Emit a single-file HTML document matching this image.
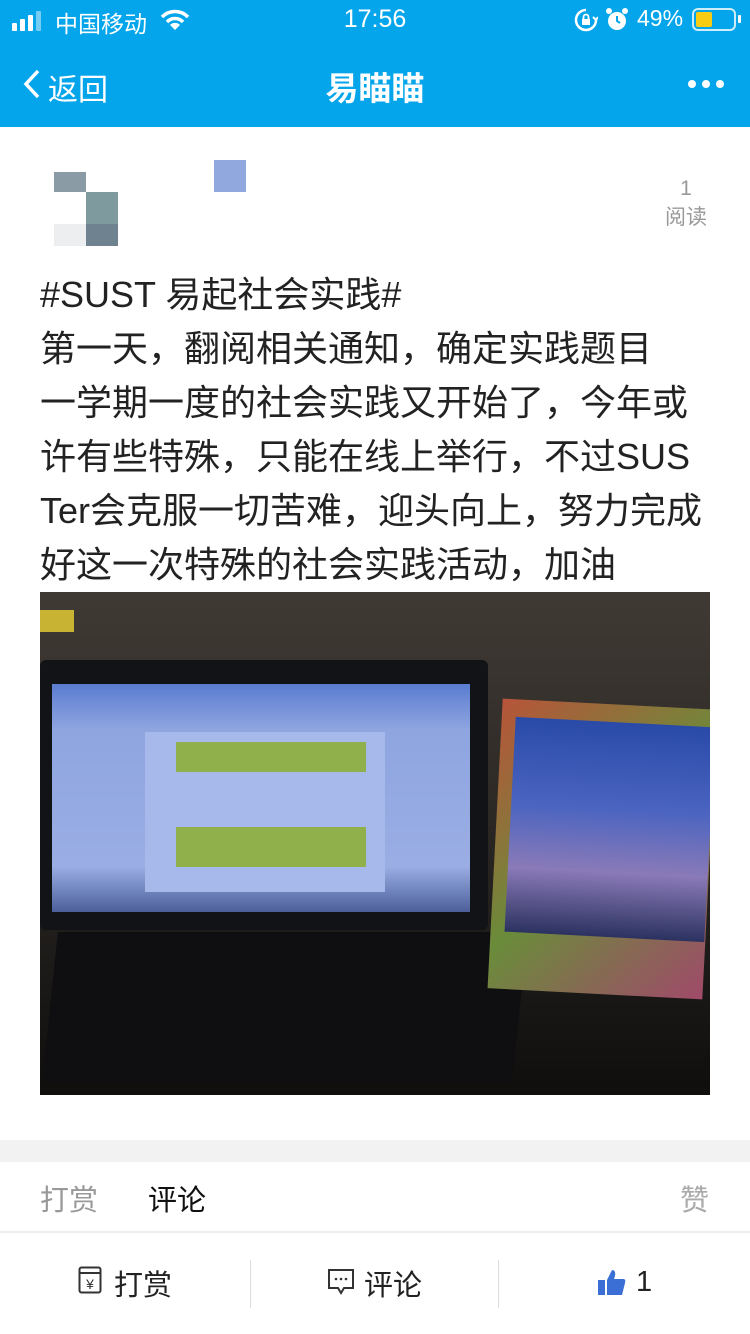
<!DOCTYPE html>
<html><head><meta charset="utf-8"><style>
*{margin:0;padding:0;box-sizing:border-box}
body{width:750px;height:1334px;background:#fff;font-family:"Liberation Sans","Noto Sans CJK SC",sans-serif;position:relative;overflow:hidden}
.abs{position:absolute}
</style></head><body>
<div class="abs" style="left:0;top:0;width:750px;height:127px;background:#04a5eb"></div>
<!-- status -->
<div class="abs" style="left:12px;top:11px;display:flex;align-items:flex-end;gap:3px">
<div style="width:5px;height:8px;background:#fff;border-radius:1px"></div>
<div style="width:5px;height:12px;background:#fff;border-radius:1px"></div>
<div style="width:5px;height:16px;background:#fff;border-radius:1px"></div>
<div style="width:5px;height:20px;background:rgba(255,255,255,.45);border-radius:1px"></div>
</div>
<div class="abs" style="left:55px;top:5px;color:#fff;font-size:23px">中国移动</div>
<svg class="abs" style="left:160px;top:9px" width="30" height="22" viewBox="0 0 30 22"><path d="M2 8 A18 18 0 0 1 28 8" stroke="#fff" stroke-width="3.5" fill="none"/><path d="M7 13 A11 11 0 0 1 23 13" stroke="#fff" stroke-width="3.5" fill="none"/><path d="M15 21 L10 16 A7 7 0 0 1 20 16 Z" fill="#fff"/></svg>
<div class="abs" style="left:0;width:750px;top:5px;text-align:center;color:#fff;font-size:25px">17:56</div>
<svg class="abs" style="left:574px;top:8px" width="24" height="24" viewBox="0 0 24 24"><path d="M12 2 A10 10 0 1 0 22 12" stroke="#fff" stroke-width="2.5" fill="none"/><path d="M22 12 L19 9 M22 12 L24 9" stroke="#fff" stroke-width="2"/><rect x="8" y="11" width="8" height="6" fill="#fff"/><path d="M9.5 11 V9 A2.5 2.5 0 0 1 14.5 9 V11" stroke="#fff" stroke-width="1.8" fill="none"/></svg>
<svg class="abs" style="left:605px;top:7px" width="24" height="26" viewBox="0 0 24 26"><circle cx="12" cy="14" r="9" fill="#fff"/><circle cx="4" cy="4" r="3" fill="#fff"/><circle cx="20" cy="4" r="3" fill="#fff"/><path d="M12 9 V14 L15 16" stroke="#04a5eb" stroke-width="2" fill="none"/></svg>
<div class="abs" style="left:637px;top:5px;color:#fff;font-size:23px">49%</div>
<div class="abs" style="left:692px;top:8px;width:44px;height:23px;border:2px solid rgba(255,255,255,.8);border-radius:6px;padding:2px"><div style="width:16px;height:15px;background:#f7cc12;border-radius:2px"></div></div>
<div class="abs" style="left:738px;top:15px;width:3px;height:8px;background:#fff;border-radius:1px"></div>
<!-- nav -->
<svg class="abs" style="left:22px;top:68px" width="20" height="32" viewBox="0 0 20 32"><path d="M16 3 L4 16 L16 29" stroke="#fff" stroke-width="3.5" fill="none"/></svg>
<div class="abs" style="left:48px;top:65px;color:#fff;font-size:30px">返回</div>
<div class="abs" style="left:0;width:750px;top:62px;text-align:center;color:#fff;font-size:33px;font-weight:bold">易瞄瞄</div>
<div class="abs" style="left:688px;top:80px;display:flex;gap:6px"><i style="width:8px;height:8px;background:#fff;border-radius:50%;display:block"></i><i style="width:8px;height:8px;background:#fff;border-radius:50%;display:block"></i><i style="width:8px;height:8px;background:#fff;border-radius:50%;display:block"></i></div>
<!-- avatar -->
<div class="abs" style="left:54px;top:172px;width:32px;height:20px;background:#8a9ba5"></div>
<div class="abs" style="left:86px;top:192px;width:32px;height:32px;background:#7f9a9f"></div>
<div class="abs" style="left:86px;top:224px;width:32px;height:22px;background:#6e8290"></div>
<div class="abs" style="left:54px;top:224px;width:32px;height:22px;background:#eceef0"></div>
<div class="abs" style="left:214px;top:160px;width:32px;height:32px;background:#91a8de"></div>
<div class="abs" style="left:660px;top:174px;width:52px;text-align:center;color:#999;font-size:21px;line-height:29px">1<br>阅读</div>
<!-- text -->
<div class="abs" style="left:40px;top:268px;width:700px;font-size:36px;line-height:54px;color:#222;white-space:nowrap">#SUST 易起社会实践#<br>第一天，翻阅相关通知，确定实践题目<br>一学期一度的社会实践又开始了，今年或<br>许有些特殊，只能在线上举行，不过SUS<br>Ter会克服一切苦难，迎头向上，努力完成<br>好这一次特殊的社会实践活动，加油</div>
<!-- photo -->
<div class="abs" style="left:40px;top:592px;width:670px;height:503px;background:linear-gradient(180deg,#403a34 0%,#2e2a26 40%,#1c1a18 75%,#0f0e0d 100%);overflow:hidden">
<div class="abs" style="left:0;top:18px;width:34px;height:22px;background:#c8b432"></div>
<div class="abs" style="left:0;top:68px;width:448px;height:270px;background:#121316;border-radius:6px"></div>
<div class="abs" style="left:12px;top:92px;width:418px;height:228px;background:linear-gradient(180deg,#5a7cd0,#8fa5e0 20%,#9aaee4 80%,#4c5f9a)"></div>
<div class="abs" style="left:105px;top:140px;width:240px;height:160px;background:#a7b9ea"></div>
<div class="abs" style="left:136px;top:150px;width:190px;height:30px;background:#8fb04a"></div>
<div class="abs" style="left:136px;top:235px;width:190px;height:40px;background:#8fb04a"></div>
<div class="abs" style="left:10px;top:340px;width:470px;height:150px;background:#0f0f11;transform:skewX(-6deg)"></div>
<div class="abs" style="left:455px;top:112px;width:215px;height:290px;background:linear-gradient(135deg,#b8543a,#6a8c3a,#a04a6a);transform:rotate(3deg)"></div>
<div class="abs" style="left:470px;top:130px;width:200px;height:215px;background:linear-gradient(180deg,#2a4aa8,#4a64c0 40%,#8a7ab8 70%,#2b3260);transform:rotate(3deg)"></div>
</div>
<div class="abs" style="left:0;top:1140px;width:750px;height:22px;background:#f2f2f2"></div>
<div class="abs" style="left:40px;top:1177px;font-size:29px;color:#999">打赏</div>
<div class="abs" style="left:148px;top:1177px;font-size:29px;color:#111">评论</div>
<div class="abs" style="left:680px;top:1177px;font-size:29px;color:#aaa">赞</div>
<div class="abs" style="left:0;top:1231px;width:750px;height:2px;background:#eee"></div>
<div class="abs" style="left:250px;top:1260px;width:1px;height:48px;background:#ddd"></div>
<div class="abs" style="left:498px;top:1260px;width:1px;height:48px;background:#ddd"></div>
<svg class="abs" style="left:78px;top:1266px" width="24" height="28" viewBox="0 0 24 28"><rect x="1.5" y="1.5" width="21" height="25" rx="2" fill="none" stroke="#333" stroke-width="2"/><path d="M2 7 L22 7" stroke="#333" stroke-width="2"/><text x="12" y="23" font-size="14" text-anchor="middle" fill="#333" font-family="Liberation Sans">¥</text></svg>
<div class="abs" style="left:114px;top:1262px;font-size:29px;color:#222">打赏</div>
<svg class="abs" style="left:327px;top:1268px" width="28" height="28" viewBox="0 0 28 28"><path d="M2 2 H26 V20 H17 L14 25 L11 20 H2 Z" fill="none" stroke="#333" stroke-width="2"/><circle cx="9" cy="11" r="1.3" fill="#333"/><circle cx="14" cy="11" r="1.3" fill="#333"/><circle cx="19" cy="11" r="1.3" fill="#333"/></svg>
<div class="abs" style="left:364px;top:1262px;font-size:29px;color:#222">评论</div>
<svg class="abs" style="left:597px;top:1268px" width="30" height="28" viewBox="0 0 30 28"><rect x="1" y="12" width="7" height="15" fill="#3b6fd6"/><path d="M10 12 L15 2 Q19 2 18 8 L17 11 H27 Q29 12 28 15 L25 27 H10 Z" fill="#3b6fd6"/></svg>
<div class="abs" style="left:636px;top:1266px;font-size:29px;color:#222">1</div>
</body></html>
